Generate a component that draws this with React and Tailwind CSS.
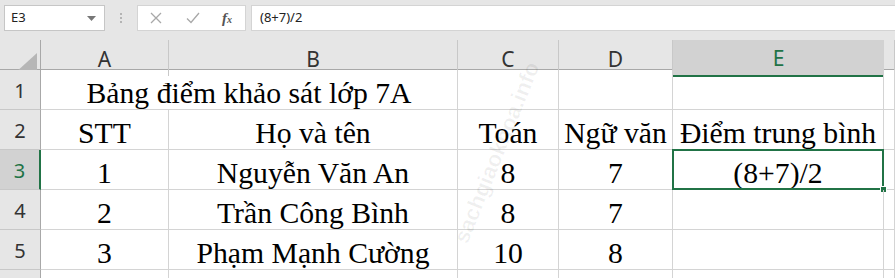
import React from "react";

const grid = "grid grid-cols-[41px_128px_289px_101px_114px_211px_1fr]";
const ui = "font-['Noto_Sans',sans-serif]";
const serif = "font-['Liberation_Serif',serif]";

const rows = [
	["2", "STT", "Họ và tên", "Toán", "Ngữ văn", "Điểm trung bình"],
	["3", "1", "Nguyễn Văn An", "8", "7", "(8+7)/2"],
	["4", "2", "Trần Công Bình", "8", "7", ""],
	["5", "3", "Phạm Mạnh Cường", "10", "8", ""],
];

function FormulaBar() {
	return (
		<div className="flex h-10 items-start gap-0 bg-[#e6e6e6] pt-[5px] pl-1">
			<div className={`${ui} flex h-[26px] w-[101px] items-center justify-between border border-[#c6c6c6] bg-white pl-[6px] pr-2 text-[13px] text-[#222]`}>
				<span>E3</span>
				<svg width="9" height="5" viewBox="0 0 9 5">
					<path d="M0 0h9L4.5 5z" fill="#777" />
				</svg>
			</div>
			<div className="flex h-[26px] w-8 flex-col items-center justify-center gap-[2px]">
				<span className="h-[2px] w-[2px] bg-[#b4b4b4]" />
				<span className="h-[2px] w-[2px] bg-[#b4b4b4]" />
				<span className="h-[2px] w-[2px] bg-[#b4b4b4]" />
			</div>
			<div className="flex h-[26px] w-[109px] items-center border border-[#d4d4d4] bg-white pl-[12px]">
				<svg width="12" height="12" viewBox="0 0 12 12" className="mr-[24px]">
					<path d="M1 1l10 10M11 1L1 11" stroke="#a8a8a8" strokeWidth="1.3" fill="none" />
				</svg>
				<svg width="14" height="12" viewBox="0 0 14 12" className="mr-[22px]">
					<path d="M1 6.5l4 4L13 1" stroke="#a8a8a8" strokeWidth="1.3" fill="none" />
				</svg>
				<span className={`${serif} text-[15px] italic font-bold text-[#555] leading-none`}>
					f<span className="text-[10px]">x</span>
				</span>
			</div>
			<div className={`${ui} ml-[5px] flex h-[26px] flex-1 items-center border-y border-l border-[#d4d4d4] bg-white pl-2 text-[13px] text-[#222]`}>
				(8+7)/2
			</div>
		</div>
	);
}

function Header() {
	const letters = ["A", "B", "C", "D", "E", ""];
	return (
		<div className={`${grid} h-[30px] bg-[#e6e6e6] border-b border-[#a8a8a8]`}>
			<div className="flex items-end justify-end border-r border-[#a8a8a8] pb-[3px] pr-[3px]">
				<svg width="22" height="20" viewBox="0 0 22 20">
					<path d="M22 0V20H0z" fill="#b6b6b6" />
				</svg>
			</div>
			{letters.map((l, i) => (
				<div
					key={i}
					className={`${ui} flex items-center justify-center pt-[3px] text-[21px] ${
						l === "E"
							? "bg-[#d2d2d2] text-[#217346] border-b-2 border-[#217346] -mb-px"
							: "text-[#333] border-r border-[#c8c8c8]"
					}`}
				>
					{l}
				</div>
			))}
		</div>
	);
}

function RowNum({ n, active }) {
	return (
		<div
			className={`${ui} flex items-center justify-center pt-[3px] text-[20px] ${
				active
					? "bg-[#d2d2d2] text-[#217346] border-r-2 border-r-[#217346] border-b border-b-[#c8c8c8]"
					: "bg-[#e6e6e6] text-[#333] border-r border-r-[#a8a8a8] border-b border-b-[#c8c8c8]"
			}`}
		>
			{n}
		</div>
	);
}

function Cell({ children, className = "" }) {
	return (
		<div
			className={`${serif} flex items-end justify-center overflow-visible whitespace-nowrap border-r border-b border-[#d4d4d4] text-[29.7px] leading-[32px] text-black ${className}`}
		>
			{children}
		</div>
	);
}

export default function App() {
	return (
		<div className="h-[278px] w-[895px] overflow-hidden bg-white">
			<FormulaBar />
			<Header />
			<div className="relative">
				<div className={`${grid} h-10`}>
					<RowNum n="1" />
					<Cell className="col-span-2">Bảng điểm khảo sát lớp 7A</Cell>
					<Cell />
					<Cell />
					<Cell />
					<Cell />
				</div>
				{rows.map((r) => (
					<div key={r[0]} className={`${grid} h-10`}>
						<RowNum n={r[0]} active={r[0] === "3"} />
						<Cell>{r[1]}</Cell>
						<Cell>{r[2]}</Cell>
						<Cell>{r[3]}</Cell>
						<Cell>{r[4]}</Cell>
						<Cell className="relative">
							{r[5]}
							{r[0] === "3" && (
								<>
									<div className="pointer-events-none absolute -top-px -left-px -right-px -bottom-px border-2 border-[#217346]" />
									<div className="absolute -bottom-[4px] -right-[4px] h-[7px] w-[7px] border border-white bg-[#217346]" />
								</>
							)}
						</Cell>
						<Cell />
					</div>
				))}
				<div className={`${grid} h-10`}>
					<RowNum n="" />
					<Cell />
					<Cell />
					<Cell />
					<Cell />
					<Cell />
					<Cell />
				</div>
				<div className="pointer-events-none absolute left-[400px] top-[66px] -rotate-[68deg] whitespace-nowrap font-['Liberation_Sans',sans-serif] text-[22px] font-bold text-black/[0.06]">
					sachgiaokhoa.info
				</div>
			</div>
		</div>
	);
}
